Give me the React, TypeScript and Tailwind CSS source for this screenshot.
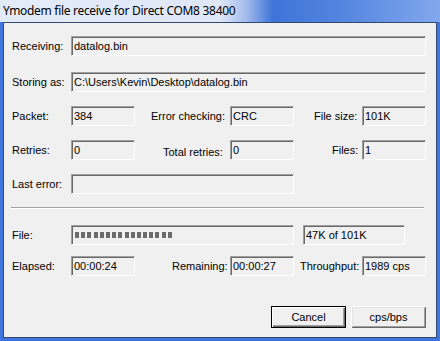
import React from "react";

const BOX =
  "flex h-[20px] items-center overflow-hidden whitespace-nowrap border border-t-[#a0a0a0] border-l-[#a0a0a0] border-b-white border-r-white bg-[#f0f0f0] pl-[2px] text-black shadow-[inset_1px_1px_0_#696969]";

function Field({ className, children }: { className: string; children?: React.ReactNode }) {
  return <div className={`${BOX} ${className}`}>{children}</div>;
}

function Label({ className, children }: { className: string; children: React.ReactNode }) {
  return <span className={`whitespace-nowrap text-black ${className}`}>{children}</span>;
}

function Progress({ chunks }: { chunks: number }) {
  return (
    <div className={`${BOX} w-[223px] pl-[3px]`}>
      <div className="flex gap-[2.2px]">
        {Array.from({ length: chunks }).map((_, i) => (
          <div key={i} className="h-[6px] w-[4px] bg-[#6b6b6b]" />
        ))}
      </div>
    </div>
  );
}

export default function App() {
  return (
    <div className="h-[341px] w-[440px] overflow-hidden bg-[#3f75dc] font-['Liberation_Sans',Arial,sans-serif] text-[11px]">
      {/* title bar */}
      <div className="flex h-[22px] items-center bg-[linear-gradient(90deg,#e4ebf8_0%,#dfe7f8_50%,#a3bcec_56%,#3f74d8_62%,#5486e0_78%,#83a8ee_100%)] pl-[3px] font-['Noto_Sans',sans-serif] text-[12px] tracking-[-0.3px] text-black">
        Ymodem file receive for Direct COM8 38400
      </div>

      {/* client area */}
      <div className="mx-[3px] h-[316px] border border-[#34496e] bg-[#f0f0f0] pl-[8px] pt-[13px]">
        <div className="flex h-[20px] items-center">
          <Label className="w-[59px]">Receiving:</Label>
          <Field className="w-[355px]">datalog.bin</Field>
        </div>

        <div className="mt-[16px] flex h-[20px] items-center">
          <Label className="w-[59px]">Storing as:</Label>
          <Field className="w-[355px]">C:\Users\Kevin\Desktop\datalog.bin</Field>
        </div>

        <div className="mt-[14px] flex h-[20px] items-center">
          <Label className="w-[59px]">Packet:</Label>
          <Field className="w-[64px]">384</Field>
          <Label className="w-[95px] pl-[16px]">Error checking:</Label>
          <Field className="w-[64px]">CRC</Field>
          <Label className="w-[68px] pl-[20px]">File size:</Label>
          <Field className="w-[64px]">101K</Field>
        </div>

        <div className="mt-[14px] flex h-[20px] items-center">
          <Label className="w-[59px]">Retries:</Label>
          <Field className="w-[64px]">0</Field>
          <Label className="w-[95px] pl-[28px] pt-[4px]">Total retries:</Label>
          <Field className="w-[64px]">0</Field>
          <Label className="w-[68px] pl-[38px]">Files:</Label>
          <Field className="w-[64px]">1</Field>
        </div>

        <div className="mt-[14px] flex h-[20px] items-center">
          <Label className="w-[59px]">Last error:</Label>
          <Field className="w-[223px]" />
        </div>

        <div className="-ml-[1px] mt-[13px] h-[2px] w-[413px] border-t border-b border-t-[#a0a0a0] border-b-white" />

        <div className="mt-[16px] flex h-[20px] items-center">
          <Label className="w-[59px]">File:</Label>
          <Progress chunks={16} />
          <Field className="ml-[9px] w-[102px]">47K of 101K</Field>
        </div>

        <div className="mt-[11px] flex h-[20px] items-center">
          <Label className="w-[59px]">Elapsed:</Label>
          <Field className="w-[64px]">00:00:24</Field>
          <Label className="w-[95px] pl-[37px]">Remaining:</Label>
          <Field className="w-[64px]">00:00:27</Field>
          <Label className="w-[68px] pl-[6px]">Throughput:</Label>
          <Field className="w-[64px]">1989 cps</Field>
        </div>

        <div className="mr-[10px] mt-[30px] flex justify-end gap-[5px]">
          <button className="h-[22px] w-[75px] border border-black bg-[#f0f0f0] text-black shadow-[inset_1px_1px_0_#fff,inset_-1px_-1px_0_#696969,inset_-2px_-2px_0_#a0a0a0]">
            Cancel
          </button>
          <button className="h-[22px] w-[75px] bg-[#f0f0f0] text-black shadow-[inset_1px_1px_0_#fff,inset_-1px_-1px_0_#696969,inset_2px_2px_0_#e3e3e3,inset_-2px_-2px_0_#a0a0a0]">
            cps/bps
          </button>
        </div>
      </div>
    </div>
  );
}
